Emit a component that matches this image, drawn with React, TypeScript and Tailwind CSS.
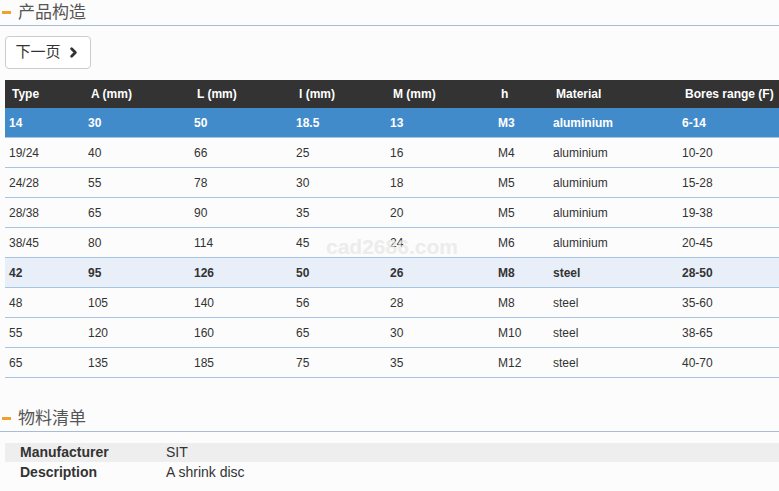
import { ChevronRight } from 'lucide-react';

type Row = {
  type: string;
  a: string;
  l: string;
  i: string;
  m: string;
  h: string;
  material: string;
  bores: string;
  kind?: 'active' | 'strong';
};

const rows: Row[] = [
  { type: '14', a: '30', l: '50', i: '18.5', m: '13', h: 'M3', material: 'aluminium', bores: '6-14', kind: 'active' },
  { type: '19/24', a: '40', l: '66', i: '25', m: '16', h: 'M4', material: 'aluminium', bores: '10-20' },
  { type: '24/28', a: '55', l: '78', i: '30', m: '18', h: 'M5', material: 'aluminium', bores: '15-28' },
  { type: '28/38', a: '65', l: '90', i: '35', m: '20', h: 'M5', material: 'aluminium', bores: '19-38' },
  { type: '38/45', a: '80', l: '114', i: '45', m: '24', h: 'M6', material: 'aluminium', bores: '20-45' },
  { type: '42', a: '95', l: '126', i: '50', m: '26', h: 'M8', material: 'steel', bores: '28-50', kind: 'strong' },
  { type: '48', a: '105', l: '140', i: '56', m: '28', h: 'M8', material: 'steel', bores: '35-60' },
  { type: '55', a: '120', l: '160', i: '65', m: '30', h: 'M10', material: 'steel', bores: '38-65' },
  { type: '65', a: '135', l: '185', i: '75', m: '35', h: 'M12', material: 'steel', bores: '40-70' },
];

const cols = 'grid grid-cols-[79px_106px_102px_94px_108px_55px_129px_1fr]';

const SectionTitle = ({ title }: { title: string }) => (
  <div className="flex items-center h-[26px] border-b border-[#a9bcd6]">
    <span className="ml-[2px] w-[9px] h-[3px] bg-[#f0a030]" />
    <span className="ml-[7px] text-[17px] text-[#555] leading-none">{title}</span>
  </div>
);

export default function App() {
  return (
    <div className="w-[779px] h-[491px] overflow-hidden bg-[#fcfcfc] text-[#333] font-['Liberation_Sans','Noto_Sans_CJK_SC',sans-serif]">
      <SectionTitle title="产品构造" />

      <div className="pt-[10px] pl-[5px]">
        <button className="flex items-center gap-[5px] h-[33px] w-[86px] justify-center rounded-[4px] border border-[#ccc] bg-white text-[15px] text-[#333]">
          下一页
          <ChevronRight size={15} strokeWidth={4.5} className="text-[#333]" />
        </button>
      </div>

      <div className="relative ml-[5px] mt-[11px] text-[12px]">
        <div className={`${cols} h-[28px] items-center bg-[#333] text-white font-bold`}>
          <span className="pl-[7px]">Type</span>
          <span className="pl-[7px]">A (mm)</span>
          <span className="pl-[7px]">L (mm)</span>
          <span className="pl-[7px]">l (mm)</span>
          <span className="pl-[7px]">M (mm)</span>
          <span className="pl-[7px]">h</span>
          <span className="pl-[7px]">Material</span>
          <span className="pl-[7px]">Bores range (F)</span>
        </div>

        {rows.map((r) => {
          const bg =
            r.kind === 'active'
              ? 'bg-[#428bca] text-white font-bold'
              : r.kind === 'strong'
                ? 'bg-[#e8eff9] font-bold'
                : '';
          return (
            <div key={r.type} className={`${cols} h-[30px] items-center border-b border-[#a5c4e6] ${bg}`}>
              <span className="pl-[4px]">{r.type}</span>
              <span className="pl-[4px]">{r.a}</span>
              <span className="pl-[4px]">{r.l}</span>
              <span className="pl-[4px]">{r.i}</span>
              <span className="pl-[4px]">{r.m}</span>
              <span className="pl-[4px]">{r.h}</span>
              <span className="pl-[4px]">{r.material}</span>
              <span className="pl-[4px]">{r.bores}</span>
            </div>
          );
        })}

        <span className="absolute left-[321px] top-[151px] text-[21px] font-bold text-[#e6e6e6] opacity-70 pointer-events-none">
          cad2686.com
        </span>
      </div>

      <div className="mt-[28px]">
        <SectionTitle title="物料清单" />
      </div>

      <div className="ml-[5px] mt-[11px] text-[14px]">
        <div className="flex h-[19px] items-center bg-[#eee]">
          <span className="w-[161px] pl-[15px] font-bold">Manufacturer</span>
          <span>SIT</span>
        </div>
        <div className="flex h-[20px] items-center">
          <span className="w-[161px] pl-[15px] font-bold">Description</span>
          <span>A shrink disc</span>
        </div>
      </div>
    </div>
  );
}
